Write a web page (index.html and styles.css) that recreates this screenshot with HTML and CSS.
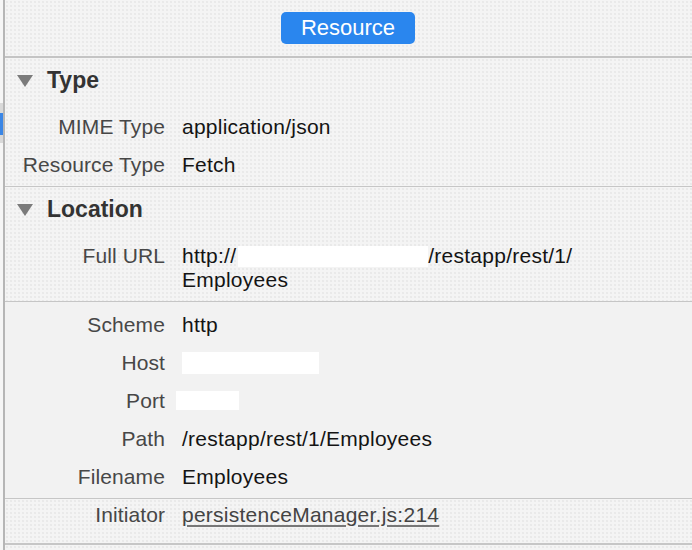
FILE: index.html
```html
<!DOCTYPE html>
<html>
<head>
<meta charset="utf-8">
<link rel="stylesheet" href="styles.css">
</head>
<body>
<div class="app">
  <div class="gutter">
    <div class="gutter-tab"><div class="gutter-mark"></div></div>
  </div>
  <div class="panel">
    <div class="topbar">
      <button class="tab-btn">Resource</button>
    </div>

    <section class="section dotted">
      <div class="sec-head">
        <svg class="disclosure" width="16" height="12" viewBox="0 0 16 12"><path d="M0 0 H16 L8 12 Z" fill="#7b7b7b"/></svg>
        <span class="sec-title">Type</span>
      </div>
      <div class="row"><span class="label">MIME Type</span><span class="value">application/json</span></div>
      <div class="row"><span class="label">Resource Type</span><span class="value">Fetch</span></div>
    </section>

    <section class="section dotted">
      <div class="sec-head">
        <svg class="disclosure" width="16" height="12" viewBox="0 0 16 12"><path d="M0 0 H16 L8 12 Z" fill="#7b7b7b"/></svg>
        <span class="sec-title">Location</span>
      </div>
      <div class="row"><span class="label">Full URL</span><span class="value">http://<span class="redact redact-url"></span>/restapp/rest/1/<br>Employees</span></div>
    </section>

    <section class="section plain parts">
      <div class="row"><span class="label">Scheme</span><span class="value">http</span></div>
      <div class="row"><span class="label">Host</span><span class="value"><span class="redact redact-host"></span></span></div>
      <div class="row"><span class="label">Port</span><span class="value"><span class="redact redact-port"></span></span></div>
      <div class="row"><span class="label">Path</span><span class="value">/restapp/rest/1/Employees</span></div>
      <div class="row"><span class="label">Filename</span><span class="value">Employees</span></div>
    </section>

    <section class="section dotted initiator">
      <div class="row"><span class="label">Initiator</span><span class="value"><a class="link" href="#">persistenceManager.js:214</a></span></div>
    </section>
    <div class="tail dotted"></div>
  </div>
</div>
</body>
</html>
```

FILE: styles.css
```css
html, body {
  margin: 0;
  padding: 0;
  height: 100%;
}
body {
  background: #f4f4f4;
  font-family: "Liberation Sans", Arial, sans-serif;
  overflow: hidden;
}
.app {
  display: flex;
  height: 550px;
}
.gutter {
  width: 3px;
  background: #f6f6f6;
  border-right: 2px solid #b6b6b6;
  flex: none;
}
.gutter-tab {
  margin-top: 103px;
  height: 40px;
  background: #d9d9d9;
  padding-top: 10px;
  box-sizing: border-box;
}
.gutter-mark {
  width: 3px;
  height: 22px;
  background: #3a86e6;
}
.panel {
  flex: 1;
  display: flex;
  flex-direction: column;
}
.dotted {
  background-color: #f4f4f4;
  background-image: radial-gradient(circle, #e6e6e6 0.6px, transparent 1px);
  background-size: 4px 4px;
}
.plain {
  background: #f2f2f2;
}
.topbar {
  height: 58px;
  display: flex;
  align-items: flex-start;
  justify-content: center;
  padding-top: 12px;
  box-sizing: border-box;
  border-bottom: 2px solid #c4c4c4;
  background-color: #f4f4f4;
  background-image: radial-gradient(circle, #e6e6e6 0.6px, transparent 1px);
  background-size: 4px 4px;
}
.tab-btn {
  width: 134px;
  height: 32px;
  border: none;
  border-radius: 5px;
  background: #2a86ee;
  color: #fff;
  font-family: "Liberation Sans", Arial, sans-serif;
  font-size: 22px;
  line-height: 32px;
  padding: 0;
  margin-left: -1px;
}
.section {
  border-bottom: 1px solid #c6c6c6;
  padding-bottom: 2px;
}
.sec-head {
  height: 44px;
  margin-bottom: 6px;
  display: flex;
  align-items: center;
  padding-left: 12px;
}
.disclosure {
  flex: none;
  margin-top: 2px;
  margin-right: 14px;
}
.sec-title {
  font-size: 23px;
  font-weight: bold;
  color: #333333;
  line-height: 44px;
}
.row {
  display: flex;
  padding: 7px 0;
  font-size: 21px;
  line-height: 24px;
  letter-spacing: 0.25px;
}
.label {
  width: 160px;
  flex: none;
  text-align: right;
  color: #474747;
  letter-spacing: 0.1px;
}
.value {
  margin-left: 17px;
  color: #141414;
}
.redact {
  display: inline-block;
  background: #ffffff;
}
.redact-url {
  width: 190px;
  height: 21px;
  vertical-align: -4px;
  margin-left: 2px;
}
.redact-host {
  width: 137px;
  height: 22px;
  vertical-align: -4px;
}
.redact-port {
  width: 63px;
  height: 19px;
  vertical-align: -2px;
  margin-left: -6px;
}
.parts {
  padding-top: 4px;
}
.initiator {
  padding-top: 0;
  padding-bottom: 0;
  border-bottom: 2px solid #c6c6c6;
}
.initiator .row {
  padding: 4px 0 16px;
}
.link {
  color: #444;
  text-decoration: underline;
  text-decoration-color: #777;
  text-underline-offset: 3px;
}
.tail {
  flex: 1;
}
```
